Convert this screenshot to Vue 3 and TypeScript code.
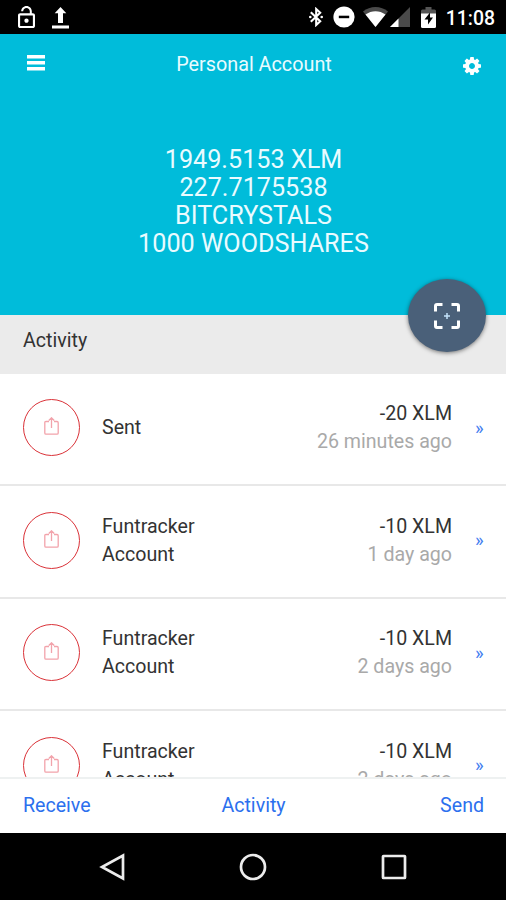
<script setup lang="ts">
interface Transaction {
  id: number
  name: string
  amount: string
  time: string
}

const balances: string[] = ['1949.5153 XLM', '227.7175538', 'BITCRYSTALS', '1000 WOODSHARES']

const transactions: Transaction[] = [
  { id: 1, name: 'Sent', amount: '-20 XLM', time: '26 minutes ago' },
  { id: 2, name: 'Funtracker Account', amount: '-10 XLM', time: '1 day ago' },
  { id: 3, name: 'Funtracker Account', amount: '-10 XLM', time: '2 days ago' },
  { id: 4, name: 'Funtracker Account', amount: '-10 XLM', time: '2 days ago' },
]
</script>

<template>
  <div class="screen">
    <div class="status">
      <svg class="lock" viewBox="4 1 16 21" preserveAspectRatio="none">
        <path d="M12 17c1.1 0 2-.9 2-2s-.9-2-2-2-2 .9-2 2 .9 2 2 2zm6-9h-1V6c0-2.76-2.24-5-5-5S7 3.24 7 6h1.9c0-1.71 1.39-3.1 3.1-3.1 1.71 0 3.1 1.39 3.1 3.1v2H6c-1.1 0-2 .9-2 2v10c0 1.1.9 2 2 2h12c1.1 0 2-.9 2-2V10c0-1.1-.9-2-2-2zm0 12H6V10h12v10z" />
      </svg>
      <svg class="upload" viewBox="0 0 17 22">
        <path d="M8.500 0 14.300 6.200H11V16H6V6.200H2.700zM0 18.600h17v3H0z" />
      </svg>
      <div class="status-right">
        <svg class="bluetooth" viewBox="0 0 14 20">
          <path d="M1.800 5.200 11.200 14.300 7.200 18V2L11.200 5.700 1.800 14.800" fill="none" stroke="#fff" stroke-width="2.100" />
          <circle cx="1.300" cy="10" r="1.300" /><circle cx="12.700" cy="10" r="1.300" />
        </svg>
        <svg class="dnd" viewBox="0 0 22 22">
          <circle cx="11" cy="11" r="10.600" /><path d="M5.800 9.700h10.400v2.500H5.800z" fill="#000" />
        </svg>
        <svg class="wifi" viewBox="0 0 25 20">
          <path d="M12.500 20 0 4.500C7-1.500 18-1.500 25 4.500z" fill="#4a4a4a" />
          <path d="M12.500 20 2.500 7.600c6-4.500 14-4.500 20 0z" />
        </svg>
        <svg class="signal" viewBox="0 0 20 20">
          <path d="M0 20 20 0V20z" fill="#4a4a4a" /><path d="M0 20 8.500 11.500V20z" />
        </svg>
        <svg class="battery" viewBox="0 0 15 21">
          <path d="M1.500 2.500H4.500V0h6v2.500h3Q15 2.500 15 4v3H0V4q0-1.500 1.500-1.500z" fill="#555" />
          <path d="M0 6.500h15v13q0 1.500-1.500 1.500h-12Q0 21 0 19.500z" />
          <path d="M9 5.500 3.500 12.500H7v5l5-7H9z" fill="#000" />
        </svg>
        <span class="clock">11:08</span>
      </div>
    </div>

    <header class="hero">
      <div class="toolbar">
        <svg class="burger" viewBox="0 0 18 16"><path d="M0 0h18v3.500H0zM0 6h18v3.500H0zM0 12h18v3.500H0z" /></svg>
        <h1 class="title">Personal Account</h1>
        <svg class="gear" viewBox="0 0 1536 1536">
          <path d="M1024 768q0-106-75-181t-181-75-181 75-75 181 75 181 181 75 181-75 75-181zm512-109v222q0 12-8 23t-20 13l-185 28q-19 54-39 91 35 50 107 138 10 12 10 25t-9 23q-27 37-99 108t-94 71q-12 0-26-9l-138-108q-44 23-91 38-16 136-29 186-7 28-36 28h-222q-14 0-24.500-8.500t-11.500-21.500l-28-184q-49-16-90-37l-141 107q-10 9-25 9-14 0-25-11-126-114-165-168-7-10-7-23 0-12 8-23 15-21 51-66.500t54-70.500q-27-50-41-99l-183-27q-13-2-21-12.500t-8-23.500v-222q0-12 8-23t19-13l186-28q14-46 39-92-40-57-107-138-10-12-10-24 0-10 9-23 26-36 98.500-107.500t94.500-71.500q13 0 26 10l138 107q44-23 91-38 16-136 29-186 7-28 36-28h222q14 0 24.500 8.500t11.500 21.500l28 184q49 16 90 37l142-107q9-9 24-9 13 0 25 10 129 119 165 170 7 8 7 22 0 12-8 23-15 21-51 66.500t-54 70.500q26 50 41 98l183 28q13 2 21 12.500t8 23.500z" />
        </svg>
      </div>
      <div class="balances">
        <div v-for="line in balances" :key="line">{{ line }}</div>
      </div>
      <button class="fab" type="button" aria-label="Scan">
        <svg class="scan" viewBox="0 0 26 26">
          <path d="M1.500 8.500V3q0-1.500 1.500-1.500H8.500M17.500 1.500H23q1.500 0 1.500 1.500V8.500M24.500 17.500V23q0 1.500-1.500 1.500H17.500M8.500 24.500H3q-1.500 0-1.500-1.500V17.500" fill="none" stroke="#fff" stroke-width="3" />
          <path d="M13 10v6M10 13h6" stroke="#c4e2fa" stroke-width="1.500" />
        </svg>
      </button>
    </header>

    <h2 class="section">Activity</h2>

    <main class="list">
      <div v-for="tx in transactions" :key="tx.id" class="row">
        <div class="badge">
          <svg class="share" viewBox="0 0 15 18">
            <path d="M5 4.500H2Q.8 4.500.8 5.700V16q0 1.200 1.200 1.200H13q1.200 0 1.200-1.200V5.700Q14.200 4.500 13 4.500H10M7.500 11V1M4.800 3.500 7.500.8l2.700 2.700" fill="none" stroke="#f2a3ab" stroke-width="1.300" />
          </svg>
        </div>
        <div class="name">{{ tx.name }}</div>
        <div class="detail">
          <div>{{ tx.amount }}</div>
          <div class="time">{{ tx.time }}</div>
        </div>
        <span class="more">»</span>
      </div>
    </main>

    <nav class="tabs">
      <span class="tab">Receive</span>
      <span class="tab">Activity</span>
      <span class="tab">Send</span>
    </nav>

    <div class="system">
      <svg class="key" viewBox="0 0 28 28"><path d="M24 2.500V25.500L3 14z" /></svg>
      <svg class="key" viewBox="0 0 28 28"><circle cx="14" cy="14" r="12" /></svg>
      <svg class="key" viewBox="0 0 28 28"><rect x="3" y="3" width="22" height="22" rx=".5" /></svg>
    </div>
  </div>
</template>

<style>
body {
  margin: 0;
}
</style>

<style scoped>
.screen {
  width: 506px;
  height: 900px;
  display: flex;
  flex-direction: column;
  overflow: hidden;
  background: #fff;
  color: #333;
  font-family: Roboto, "Liberation Sans", sans-serif;
  font-size: 19.6px;
  line-height: 28px;
}
svg {
  display: block;
  flex: none;
  fill: #fff;
}
.status {
  flex: none;
  height: 34px;
  box-sizing: border-box;
  padding: 0 11px 0 17.5px;
  display: flex;
  align-items: center;
  background: #000;
}
.lock {
  width: 17px;
  height: 22px;
}
.upload {
  width: 17px;
  height: 22px;
  margin-left: 17px;
  margin-top: 2px;
}
.status-right {
  margin-left: auto;
  display: flex;
  align-items: center;
}
.bluetooth {
  width: 14px;
  height: 20px;
}
.dnd {
  width: 22px;
  height: 22px;
  margin-left: 10px;
}
.wifi {
  width: 25px;
  height: 20px;
  margin-left: 8px;
}
.signal {
  width: 20px;
  height: 20px;
  margin-left: 2px;
}
.battery {
  width: 15px;
  height: 21px;
  margin-left: 11px;
}
.clock {
  margin-left: 10px;
  margin-top: 3px;
  color: #fff;
  font-size: 19.4px;
  font-weight: 500;
}
.hero {
  position: relative;
  flex: none;
  height: 281px;
  background: #00bcda;
  color: #e9fbff;
}
.toolbar {
  display: flex;
  align-items: center;
  justify-content: space-between;
  height: 60px;
  padding: 0 25px 0 27px;
}
.burger {
  width: 18px;
  height: 16px;
  margin-top: -2px;
}
.gear {
  width: 18px;
  height: 18px;
  margin-top: 3px;
}
.title {
  margin: 2px 0 0;
  font-size: 19.8px;
  font-weight: 400;
}
.balances {
  margin-top: 52px;
  padding-left: 1px;
  text-align: center;
  font-size: 25.2px;
  line-height: 28px;
}
.fab {
  position: absolute;
  right: 20px;
  bottom: -37px;
  width: 78px;
  height: 73px;
  padding: 0;
  border: 0;
  border-radius: 50%;
  display: flex;
  align-items: center;
  justify-content: center;
  background: #4a6079;
  box-shadow: 0 1px 4px rgba(0, 0, 0, 0.5);
}
.scan {
  width: 26px;
  height: 26px;
}
.section {
  flex: none;
  height: 58.5px;
  box-sizing: border-box;
  margin: 0;
  padding: 12px 23px 0;
  background: #ebebeb;
  font-size: 19.6px;
  font-weight: 400;
}
.list {
  flex: 1;
  min-height: 0;
  overflow: hidden;
}
.row {
  display: flex;
  align-items: center;
  height: 112.5px;
  box-sizing: border-box;
  padding: 0 22px 2px 23px;
  border-bottom: 2px solid #e8e8e8;
}
.badge {
  flex: none;
  width: 57px;
  height: 57px;
  box-sizing: border-box;
  border: 1.5px solid #da3238;
  border-radius: 50%;
  display: flex;
  align-items: center;
  justify-content: center;
}
.share {
  width: 15px;
  height: 18px;
  margin-bottom: 3px;
}
.name {
  width: 130px;
  margin-left: 22px;
  margin-top: 0.5px;
}
.detail {
  margin-left: auto;
  margin-top: 0.5px;
  text-align: right;
}
.time {
  color: #a9a9a9;
}
.more {
  width: 9px;
  margin-left: 23px;
  color: #3f7df0;
  font-size: 18.5px;
}
.tabs {
  flex: none;
  height: 56px;
  box-sizing: border-box;
  border-top: 2px solid #eef1f1;
  padding: 0 22px 1px 23px;
  display: flex;
  align-items: center;
  color: #2c70ee;
}
.tab {
  flex: 1;
  text-align: center;
}
.tab:first-child {
  text-align: left;
}
.tab:last-child {
  text-align: right;
}
.system {
  flex: none;
  height: 67px;
  display: flex;
  align-items: center;
  justify-content: center;
  gap: 112.5px;
  background: #000;
}
.key {
  width: 28px;
  height: 28px;
}
.key * {
  fill: none;
  stroke: #ececec;
  stroke-width: 2.7px;
}
</style>
